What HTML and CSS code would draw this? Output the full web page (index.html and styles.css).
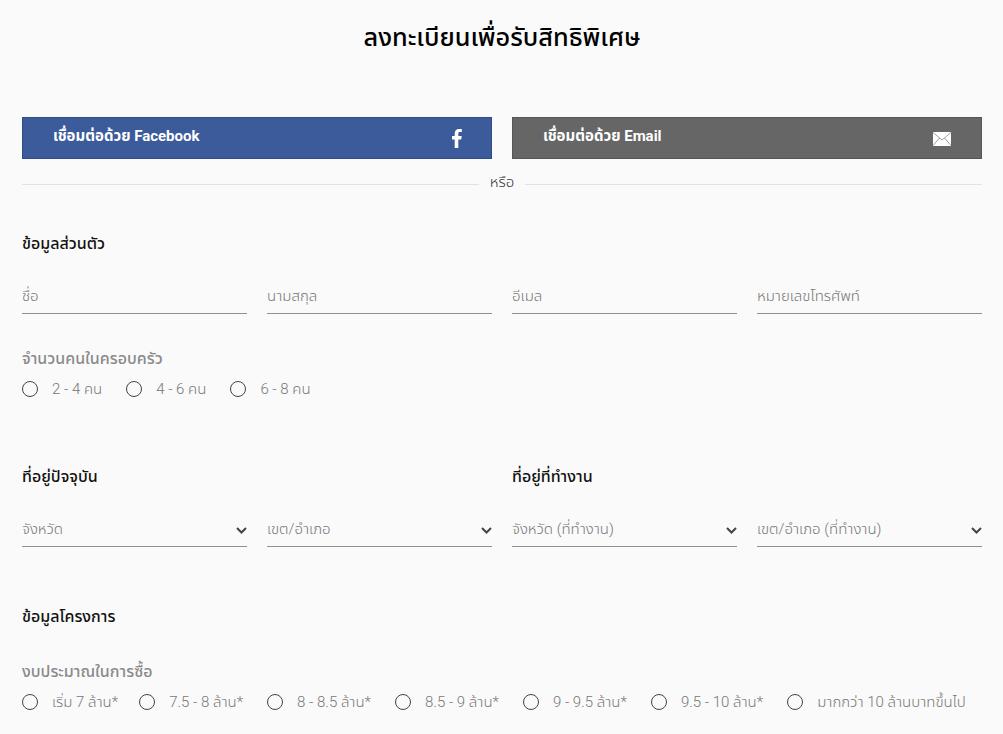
FILE: index.html
```html
<!DOCTYPE html>
<html lang="th">
<head>
  <meta charset="UTF-8" />
  <title>ลงทะเบียนเพื่อรับสิทธิพิเศษ</title>
  <link rel="stylesheet" href="styles.css">
</head>
<body>

  <h1 class="page-title">ลงทะเบียนเพื่อรับสิทธิพิเศษ</h1>

  <!-- Social connect -->
  <div class="connect-row">
    <a class="connect-btn facebook">
      <span>เชื่อมต่อด้วย Facebook</span>
      <svg class="fb-icon" width="10" height="19" viewBox="0 0 10 19">
        <path fill="#fff" d="M2.700 19V10.400H0V7h2.700V4.600C2.700 1.600 4.400 0 7.100 0c1.200 0 2.300.1 2.700.1v3H8c-1.400 0-1.700.7-1.700 1.700V7h3.400l-.5 3.400H6.300V19z"/>
      </svg>
    </a>
    <a class="connect-btn email">
      <span>เชื่อมต่อด้วย Email</span>
      <svg class="mail-icon" width="18" height="14" viewBox="0 0 18 14">
        <rect width="18" height="14" fill="#fff"/>
        <path fill="none" stroke="#777" stroke-width="0.7" d="M0 0.500 9 8 18 0.500M0 13.500 6.500 6M18 13.500 11.500 6"/>
      </svg>
    </a>
  </div>

  <div class="divider"><span>หรือ</span></div>

  <!-- Personal info -->
  <h2 class="section-title personal-title">ข้อมูลส่วนตัว</h2>
  <div class="field-grid">
    <div class="field">ชื่อ</div>
    <div class="field">นามสกุล</div>
    <div class="field">อีเมล</div>
    <div class="field">หมายเลขโทรศัพท์</div>
  </div>

  <div class="group-label family-label">จำนวนคนในครอบครัว</div>
  <div class="radio-row">
    <label class="radio"><i></i>2 - 4 คน</label>
    <label class="radio"><i></i>4 - 6 คน</label>
    <label class="radio"><i></i>6 - 8 คน</label>
  </div>

  <!-- Address -->
  <div class="address-titles">
    <h2 class="section-title">ที่อยู่ปัจจุบัน</h2>
    <h2 class="section-title">ที่อยู่ที่ทำงาน</h2>
  </div>
  <div class="field-grid">
    <div class="field select">จังหวัด<svg width="11" height="7" viewBox="0 0 11 7"><path fill="none" stroke="#444" stroke-width="2" d="M1 1l4.500 4.500L10 1"/></svg></div>
    <div class="field select">เขต/อำเภอ<svg width="11" height="7" viewBox="0 0 11 7"><path fill="none" stroke="#444" stroke-width="2" d="M1 1l4.500 4.500L10 1"/></svg></div>
    <div class="field select">จังหวัด (ที่ทำงาน)<svg width="11" height="7" viewBox="0 0 11 7"><path fill="none" stroke="#444" stroke-width="2" d="M1 1l4.500 4.500L10 1"/></svg></div>
    <div class="field select">เขต/อำเภอ (ที่ทำงาน)<svg width="11" height="7" viewBox="0 0 11 7"><path fill="none" stroke="#444" stroke-width="2" d="M1 1l4.500 4.500L10 1"/></svg></div>
  </div>

  <!-- Project info -->
  <h2 class="section-title project-title">ข้อมูลโครงการ</h2>
  <div class="group-label budget-label">งบประมาณในการซื้อ</div>
  <div class="radio-row budget-row">
    <label class="radio"><i></i>เริ่ม 7 ล้าน*</label>
    <label class="radio"><i></i>7.5 - 8 ล้าน*</label>
    <label class="radio"><i></i>8 - 8.5 ล้าน*</label>
    <label class="radio"><i></i>8.5 - 9 ล้าน*</label>
    <label class="radio"><i></i>9 - 9.5 ล้าน*</label>
    <label class="radio"><i></i>9.5 - 10 ล้าน*</label>
    <label class="radio"><i></i>มากกว่า 10 ล้านบาทขึ้นไป</label>
  </div>

</body>
</html>
```

FILE: styles.css
```css
* {
  margin: 0;
  padding: 0;
  box-sizing: border-box;
}

html, body {
  height: 734px;
  overflow: hidden;
}

body {
  font-family: Roboto, 'Noto Sans Thai', 'Noto Sans', sans-serif;
  background-color: #fafafa;
  color: #111;
  padding: 0 21px 0 22px;
}

.page-title {
  padding-top: 20px;
  height: 117px;
  text-align: center;
  font-size: 25.300px;
  line-height: 36px;
  font-weight: 500;
  color: #000;
}

.connect-row {
  display: flex;
  gap: 20px;
}

.connect-btn {
  flex: 1;
  height: 42px;
  display: flex;
  justify-content: space-between;
  padding: 7px 26px 0 30px;
  color: #fff;
  font-size: 15px;
  line-height: 22px;
  font-weight: 700;
  border: 1px solid rgba(0,0,0,0.15);
}

.facebook {
  background-color: #3b5b9b;
}

.email {
  background-color: #666;
}

.fb-icon {
  margin: 4px 3px 0 0;
}

.mail-icon {
  margin: 7px 4px 0 0;
}

.divider {
  display: flex;
  align-items: center;
  gap: 11px;
  margin-top: 13px;
  font-size: 15px;
  line-height: 20px;
  font-weight: 300;
  color: #333;
}

.divider::before,
.divider::after {
  content: "";
  flex: 1;
  height: 1px;
  margin-top: 5px;
  background-color: #e2e2e2;
}

.section-title {
  font-size: 16px;
  line-height: 24px;
  font-weight: 500;
  color: #111;
}

.personal-title {
  margin-top: 40px;
}

.field-grid {
  display: grid;
  grid-template-columns: repeat(4, 1fr);
  gap: 20px;
}

.field {
  position: relative;
  height: 42px;
  margin-top: 16px;
  padding-top: 13px;
  font-size: 15px;
  line-height: 22px;
  font-weight: 300;
  color: #777;
  border-bottom: 1px solid #8f8f8f;
}

.select svg {
  position: absolute;
  right: 0;
  top: 22px;
}

.group-label {
  font-size: 16px;
  line-height: 22px;
  font-weight: 500;
  color: #8a8a8a;
}

.family-label {
  margin-top: 34px;
}

.radio-row {
  display: flex;
  gap: 24px;
  margin-top: 8px;
}

.radio {
  display: flex;
  align-items: center;
  font-size: 15px;
  line-height: 22px;
  font-weight: 300;
  color: #777;
  white-space: nowrap;
}

.radio i {
  width: 16px;
  height: 16px;
  margin-right: 14px;
  border: 1px solid #444;
  border-radius: 50%;
}

.budget-row .radio:first-child {
  margin-right: -3px;
}

.address-titles {
  display: grid;
  grid-template-columns: 1fr 1fr;
  gap: 20px;
  margin-top: 65px;
}

.project-title {
  margin-top: 58px;
}

.budget-label {
  margin-top: 32px;
}
```
